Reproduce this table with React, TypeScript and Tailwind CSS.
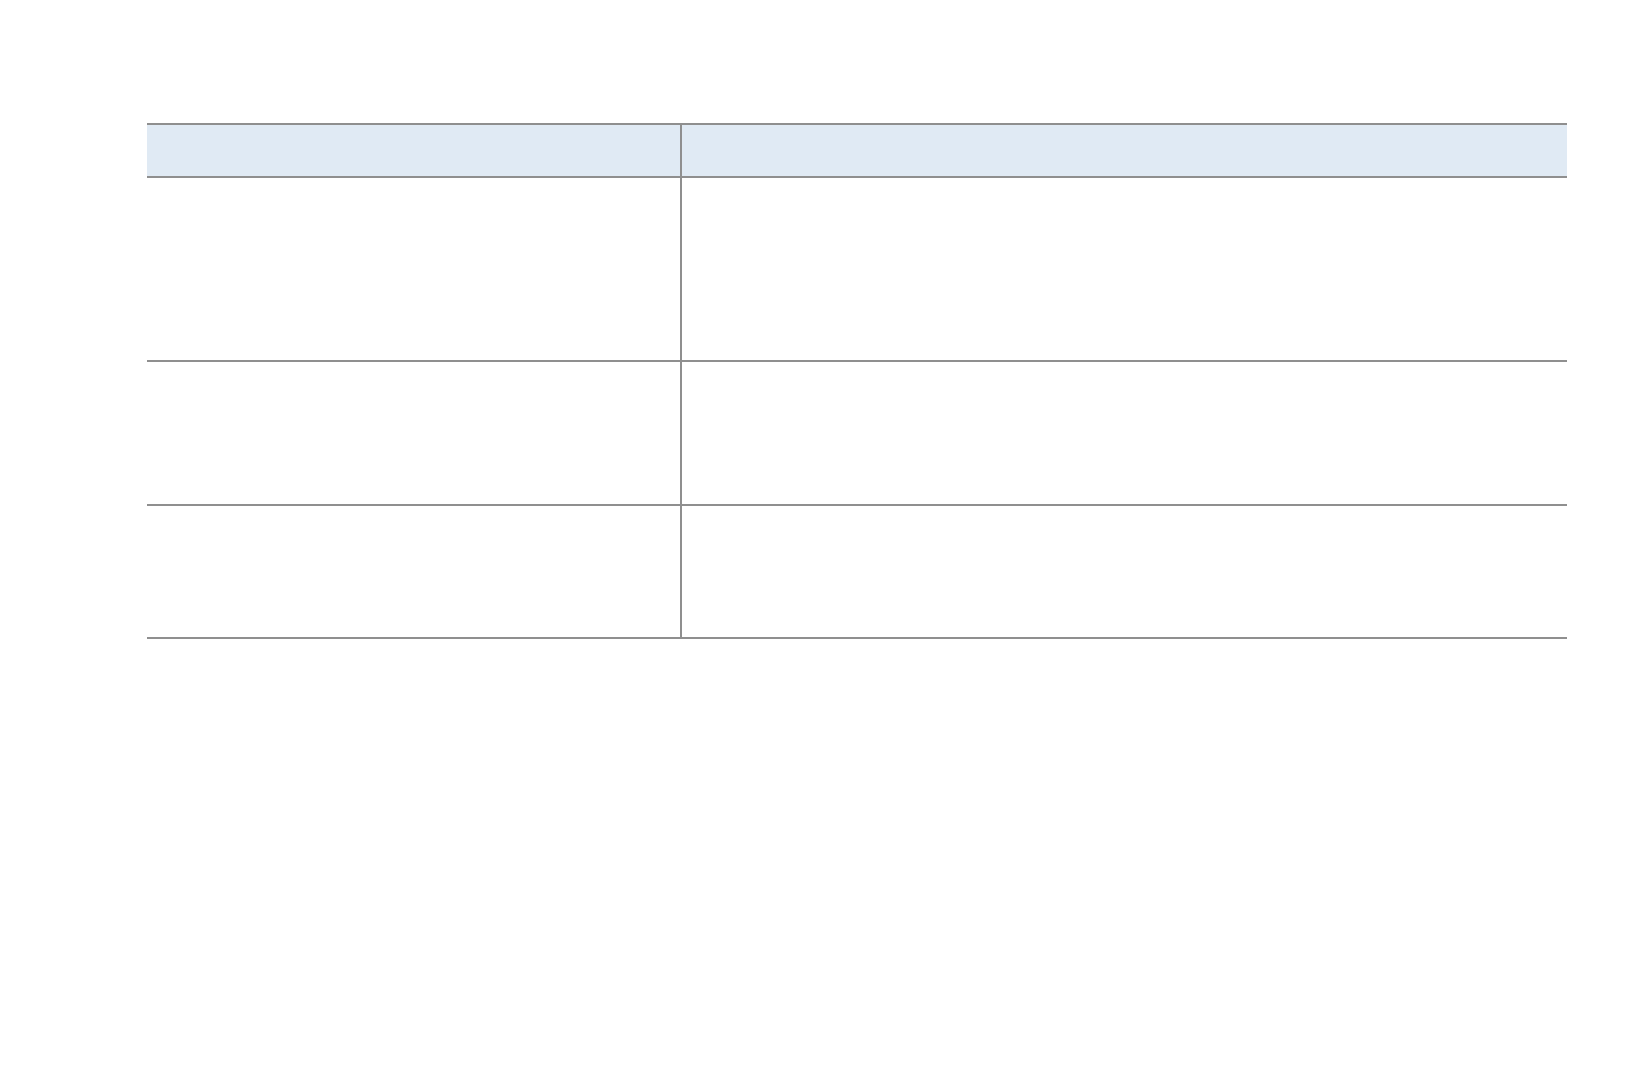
const rows = [
  { id: 'header', height: 'h-[53px]', header: true },
  { id: 'r1', height: 'h-[184px]', header: false },
  { id: 'r2', height: 'h-[144px]', header: false },
  { id: 'r3', height: 'h-[133px]', header: false },
];

export default function App() {
  return (
    <div className="min-h-[1080px] bg-white pt-[123px] pl-[147px]" style={{ fontFamily: '"Liberation Sans", Arial, sans-serif' }}>
      {/* table */}
      <div className="w-[1420px] border-t-2 border-[#8f8f8f]">
        {rows.map(row => (
          <div
            key={row.id}
            className={
              row.header
                ? 'flex h-[53px] border-b-2 border-[#8f8f8f] bg-[#e0eaf4]'
                : `flex ${row.height} border-b-2 border-[#8f8f8f]`
            }
          >
            <div className="w-[535px] shrink-0 border-r-2 border-[#8f8f8f]" />
            <div className="flex-1" />
          </div>
        ))}
      </div>
    </div>
  );
}
